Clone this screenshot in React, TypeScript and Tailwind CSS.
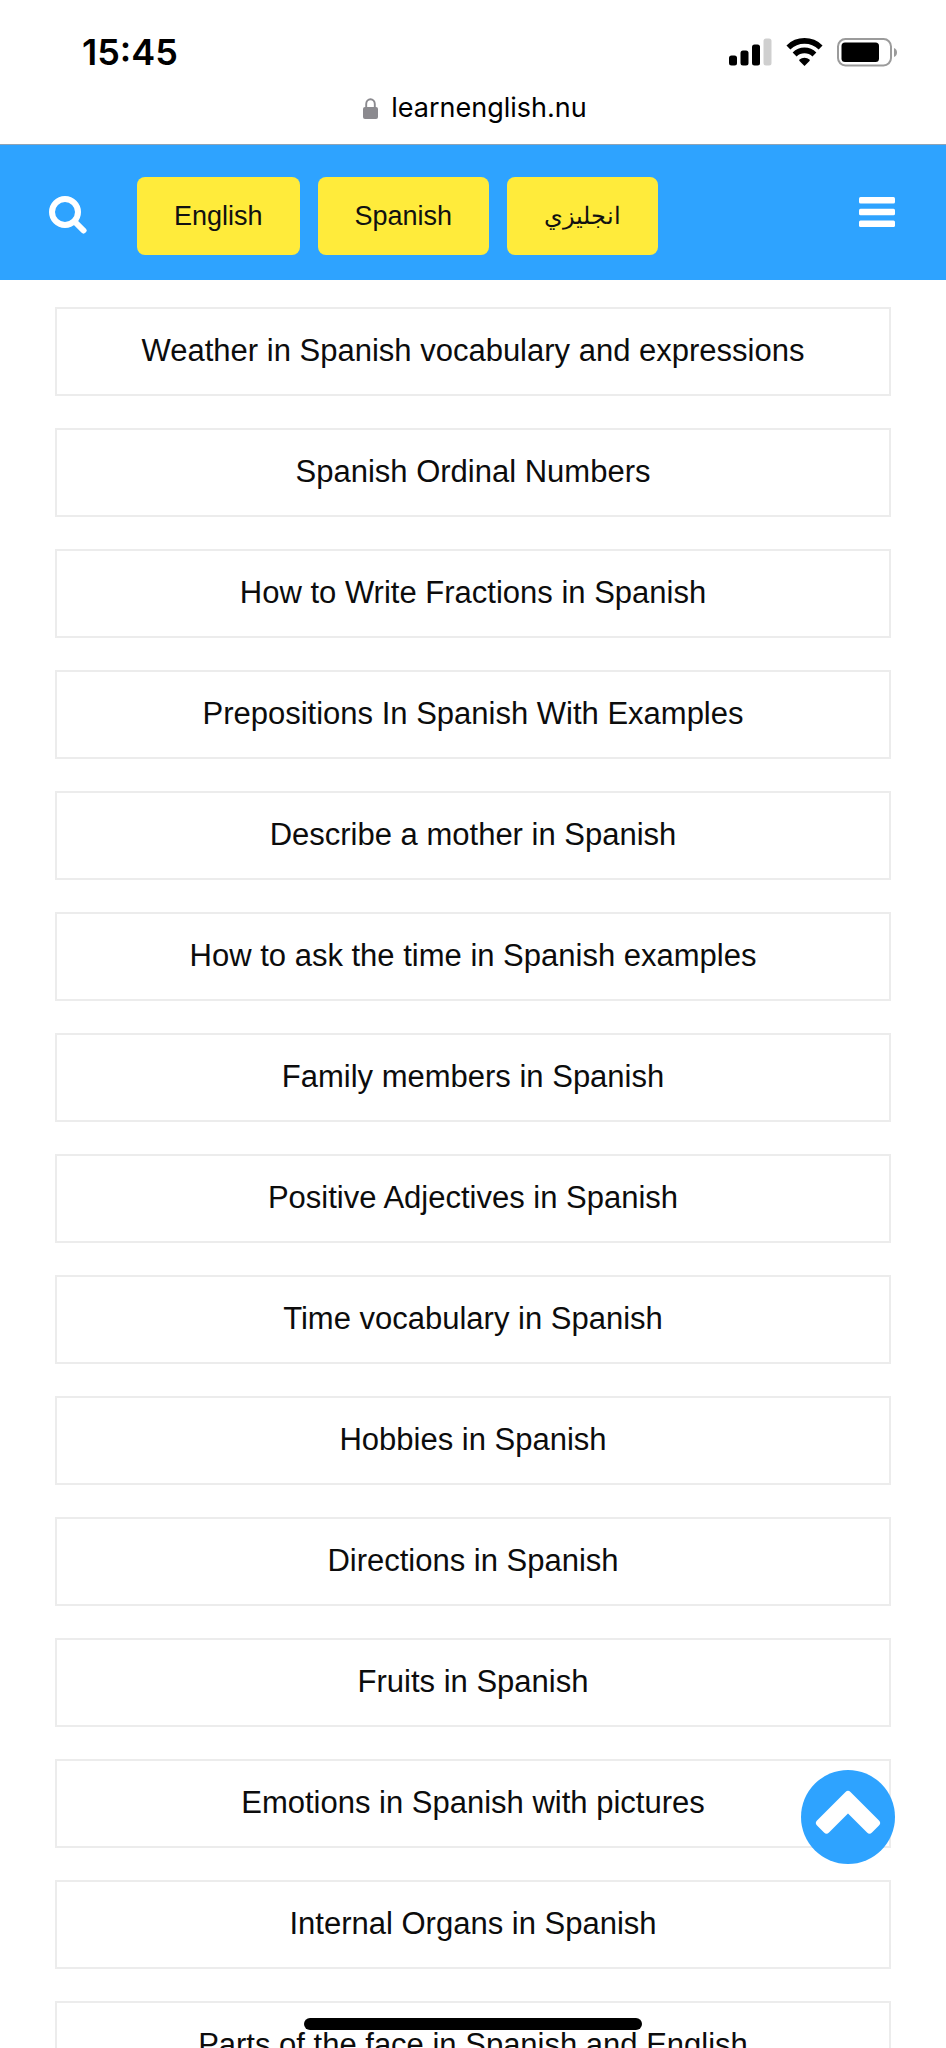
import { clsx } from "clsx";

const topics = [
  "Weather in Spanish vocabulary and expressions",
  "Spanish Ordinal Numbers",
  "How to Write Fractions in Spanish",
  "Prepositions In Spanish With Examples",
  "Describe a mother in Spanish",
  "How to ask the time in Spanish examples",
  "Family members in Spanish",
  "Positive Adjectives in Spanish",
  "Time vocabulary in Spanish",
  "Hobbies in Spanish",
  "Directions in Spanish",
  "Fruits in Spanish",
  "Emotions in Spanish with pictures",
  "Internal Organs in Spanish",
  "Parts of the face in Spanish and English",
];

const languages = [
  { label: "English", lang: "en" },
  { label: "Spanish", lang: "es" },
  { label: "انجليزي", lang: "ar" },
];

function SignalIcon() {
  return (
    <svg width="43" height="28" viewBox="0 0 43 28" aria-hidden="true">
      <rect x="0" y="17.5" width="8" height="10" rx="2.5" />
      <rect x="11.5" y="12.5" width="8" height="15" rx="2.5" />
      <rect x="23" y="6.5" width="8" height="21" rx="2.5" />
      <rect x="34.5" y="0.5" width="8" height="27" rx="2.5" fill="#cfcfcf" />
    </svg>
  );
}

function WifiIcon() {
  return (
    <svg width="37" height="28" viewBox="0 0 37 28" aria-hidden="true">
      <g fill="none" stroke="#000" strokeWidth="5.6">
        <path d="M2.4 9.4a23.2 23.2 0 0 1 32.2 0" />
        <path d="M8.6 16.4a14.2 14.2 0 0 1 19.8 0" />
      </g>
      <path d="M18.5 28l-5-5a1 1 0 0 1 0-1.4a7.6 7.6 0 0 1 10 0a1 1 0 0 1 0 1.4z" />
    </svg>
  );
}

function BatteryIcon() {
  return (
    <svg width="61" height="29" viewBox="0 0 61 29" aria-hidden="true">
      <rect x="1" y="1" width="53" height="26.5" rx="7.5" fill="none" stroke="#9b9b9b" strokeWidth="2" />
      <rect x="4.5" y="4.5" width="37.5" height="19.5" rx="3.5" />
      <path d="M57 10c4 1.5 4 7.5 0 9z" fill="#9b9b9b" />
    </svg>
  );
}

function LockIcon() {
  return (
    <svg width="15" height="21" viewBox="0 0 15 21" aria-hidden="true">
      <rect x="0" y="9" width="15" height="12" rx="2" fill="#8b8a8f" />
      <path d="M3.2 10V6a4.3 4.8 0 0 1 8.6 0v4" fill="none" stroke="#8b8a8f" strokeWidth="1.9" />
    </svg>
  );
}

function StatusBar() {
  return (
    <div className="flex items-center justify-between pt-[30px] pr-12 pb-5 pl-[82px] font-['Inter',sans-serif]">
      <time className="text-[36px] leading-[44px] font-semibold">15:45</time>
      <div className="flex items-center gap-3.5">
        <SignalIcon />
        <WifiIcon />
        <BatteryIcon />
      </div>
    </div>
  );
}

function AddressBar() {
  return (
    <div className="flex items-center justify-center gap-[13px] pb-[22px] pl-1 font-['Inter',sans-serif]">
      <LockIcon />
      <span className="text-[27px] leading-7">learnenglish.nu</span>
    </div>
  );
}

function SiteHeader() {
  return (
    <header className="flex items-center border-t border-[#8fa3b5] bg-[#2ea3ff] pt-8 pr-[51px] pb-[25px] pl-12">
      <button type="button" aria-label="Search" className="mr-[50px] pb-1">
        <svg width="39" height="39" viewBox="0 0 39 39" fill="none" stroke="#fff" aria-hidden="true">
          <circle cx="17" cy="17" r="13" strokeWidth="6" />
          <path d="M27 27l8.5 8.5" strokeWidth="6" strokeLinecap="round" />
        </svg>
      </button>
      <nav className="flex flex-1 gap-[18px]">
        {languages.map((l) => (
          <a
            key={l.lang}
            href={"#" + l.lang}
            lang={l.lang}
            className={clsx(
              "flex h-[78px] items-center rounded-lg bg-[#ffeb3b] px-[37px] leading-9 text-[#111]",
              l.lang === "ar" ? "text-[24px]" : "text-[27px]",
            )}
          >
            {l.label}
          </a>
        ))}
      </nav>
      <button type="button" aria-label="Menu" className="pb-2">
        <svg width="36" height="30" viewBox="0 0 36 30" fill="#fff" aria-hidden="true">
          <rect y="0" width="36" height="6.5" rx="1.5" />
          <rect y="11.8" width="36" height="6.5" rx="1.5" />
          <rect y="23.5" width="36" height="6.5" rx="1.5" />
        </svg>
      </button>
    </header>
  );
}

export default function App() {
  return (
    <div className="relative h-dvh overflow-hidden bg-white font-['Liberation_Sans',Arial,sans-serif] text-black">
      <StatusBar />
      <AddressBar />
      <SiteHeader />
      <main className="px-[55px] pt-[27px]">
        <ul className="flex flex-col gap-8">
          {topics.map((topic) => (
            <li key={topic}>
              <a
                href="#topic"
                className="block border-2 border-[#ececec] px-4 pt-[22px] pb-[23px] text-center text-[31px] leading-10 text-[#0c0c0c]"
              >
                {topic}
              </a>
            </li>
          ))}
        </ul>
      </main>

      <button
        type="button"
        aria-label="Back to top"
        className="absolute right-[51px] bottom-[184px] rounded-full bg-[#2ea3ff]"
      >
        <svg width="94" height="94" viewBox="0 0 94 94" aria-hidden="true">
          <path
            d="M47 24.5L75.5 53L68.5 60L47 38.5L25.5 60L18.5 53z"
            fill="#fff"
            stroke="#fff"
            strokeWidth="7"
            strokeLinejoin="round"
          />
        </svg>
      </button>
      <div className="absolute bottom-[18px] left-1/2 h-3 w-[338px] -translate-x-1/2 rounded-full bg-black" />
    </div>
  );
}
